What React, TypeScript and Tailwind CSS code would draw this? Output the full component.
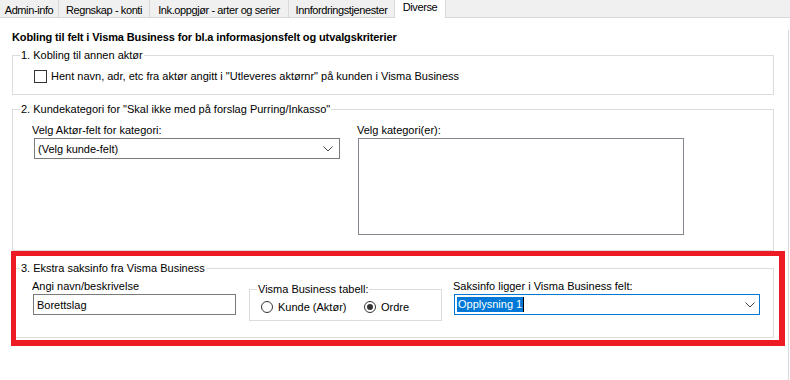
import React from "react";

const tabs = [
  { label: "Admin-info", cls: "w-[59px]" },
  { label: "Regnskap - konti", cls: "w-[91px]" },
  { label: "Ink.oppgjør - arter og serier", cls: "w-[139px]" },
  { label: "Innfordringstjenester", cls: "w-[106px]" },
];

function Chevron() {
  return (
    <svg width="10" height="6" viewBox="0 0 10 6" className="shrink-0">
      <polyline points="0.5,0.5 5,5 9.5,0.5" fill="none" stroke="#444" strokeWidth="1" />
    </svg>
  );
}

function Radio({ checked, label, wide }: { checked?: boolean; label: string; wide?: boolean }) {
  return (
    <div className={wide ? "flex items-center gap-[5px] w-[103px]" : "flex items-center gap-[5px]"}>
      <div className="w-[12px] h-[12px] rounded-full border border-[#333] bg-white flex items-center justify-center">
        {checked && <div className="w-[6px] h-[6px] rounded-full bg-[#333]" />}
      </div>
      <span>{label}</span>
    </div>
  );
}

export default function App() {
  return (
    <div className="w-[790px] h-[380px] overflow-hidden bg-white text-black text-[11px] leading-[14px] font-['Liberation_Sans',Arial,sans-serif]">
      {/* tab strip */}
      <div className="flex h-[18px] bg-[#f0f0f0] border-b border-[#d9d9d9] tracking-[-0.4px]">
        {tabs.map((t) => (
          <div
            key={t.label}
            className={`${t.cls} h-[17px] border-r border-[#d9d9d9] flex justify-center pt-[3px] whitespace-nowrap`}
          >
            {t.label}
          </div>
        ))}
        <div className="w-[51px] h-[18px] bg-white border-r border-[#d9d9d9] flex justify-center whitespace-nowrap">
          Diverse
        </div>
      </div>

      {/* tab page */}
      <div className="w-[789px] h-[362px] border-r border-[#d9d9d9] pl-[12px]">
        <div className="mt-[12px] h-[14px] font-bold tracking-[-0.12px] whitespace-nowrap">
          Kobling til felt i Visma Business for bl.a informasjonsfelt og utvalgskriterier
        </div>

        <fieldset className="mt-[4px] w-[762px] h-[47px] border border-[#dcdcdc]">
          <legend className="ml-[7px] px-[1px]">1. Kobling til annen aktør</legend>
          <div className="flex items-center gap-[4px] pl-[21px] pt-[7px]">
            <div className="w-[13px] h-[13px] border border-[#333] bg-white" />
            <span className="whitespace-nowrap">
              Hent navn, adr, etc fra aktør angitt i "Utleveres aktørnr" på kunden i Visma Business
            </span>
          </div>
        </fieldset>

        <fieldset className="mt-[7px] w-[762px] h-[149px] border border-[#dcdcdc]">
          <legend className="ml-[7px] px-[1px]">
            2. Kundekategori for "Skal ikke med på forslag Purring/Inkasso"
          </legend>
          <div className="flex pl-[19px] pt-[7px]">
            <div className="w-[308px]">
              <div>Velg Aktør-felt for kategori:</div>
              <div className="ml-[2px] mt-[1px] w-[306px] h-[21px] border border-[#7a7a7a] bg-white flex items-center justify-between pl-[3px] pr-[6px]">
                <span>(Velg kunde-felt)</span>
                <Chevron />
              </div>
            </div>
            <div className="ml-[17px]">
              <div>Velg kategori(er):</div>
              <div className="ml-[1px] mt-[1px] w-[326px] h-[97px] border border-[#828790] bg-white" />
            </div>
          </div>
        </fieldset>

        <div className="relative pt-[10px]">
          <fieldset className="w-[762px] h-[77px] border border-[#dcdcdc]">
            <legend className="ml-[7px] px-[1px]">3. Ekstra saksinfo fra Visma Business</legend>
            <div className="flex items-start pl-[19px]">
              <div className="w-[204px] shrink-0">
                <div className="mt-[4px]">Angi navn/beskrivelse</div>
                <div className="ml-[1px] mt-[1px] w-[203px] h-[21px] border border-[#7a7a7a] bg-white flex items-center pl-[3px]">
                  Borettslag
                </div>
              </div>

              <fieldset className="ml-[13px] mt-[7px] w-[193px] min-w-0 h-[39px] shrink-0 border border-[#dcdcdc]">
                <legend className="ml-[7px] px-[1px]">Visma Business tabell:</legend>
                <div className="flex pl-[11px] pt-[4px]">
                  <Radio label="Kunde (Aktør)" wide />
                  <Radio label="Ordre" checked />
                </div>
              </fieldset>

              <div className="ml-[11px] shrink-0">
                <div className="mt-[4px]">Saksinfo ligger i Visma Business felt:</div>
                <div className="ml-[1px] mt-[1px] w-[306px] h-[21px] border border-[#0078d7] bg-white flex items-center justify-between pl-[2px] pr-[4px]">
                  <div className="flex items-center">
                    <span className="bg-[#0078d7] text-white px-[1px] leading-[15px]">Opplysning 1</span>
                    <span className="w-[1px] h-[15px] bg-black" />
                  </div>
                  <Chevron />
                </div>
              </div>
            </div>
          </fieldset>

          {/* red highlight annotation over section 3 */}
          <div className="pointer-events-none absolute left-[-1px] top-0 w-[774px] h-[95px] border-[5px] border-r-[6px] border-b-[6px] border-[#ed1c24]" />
        </div>
      </div>
    </div>
  );
}
